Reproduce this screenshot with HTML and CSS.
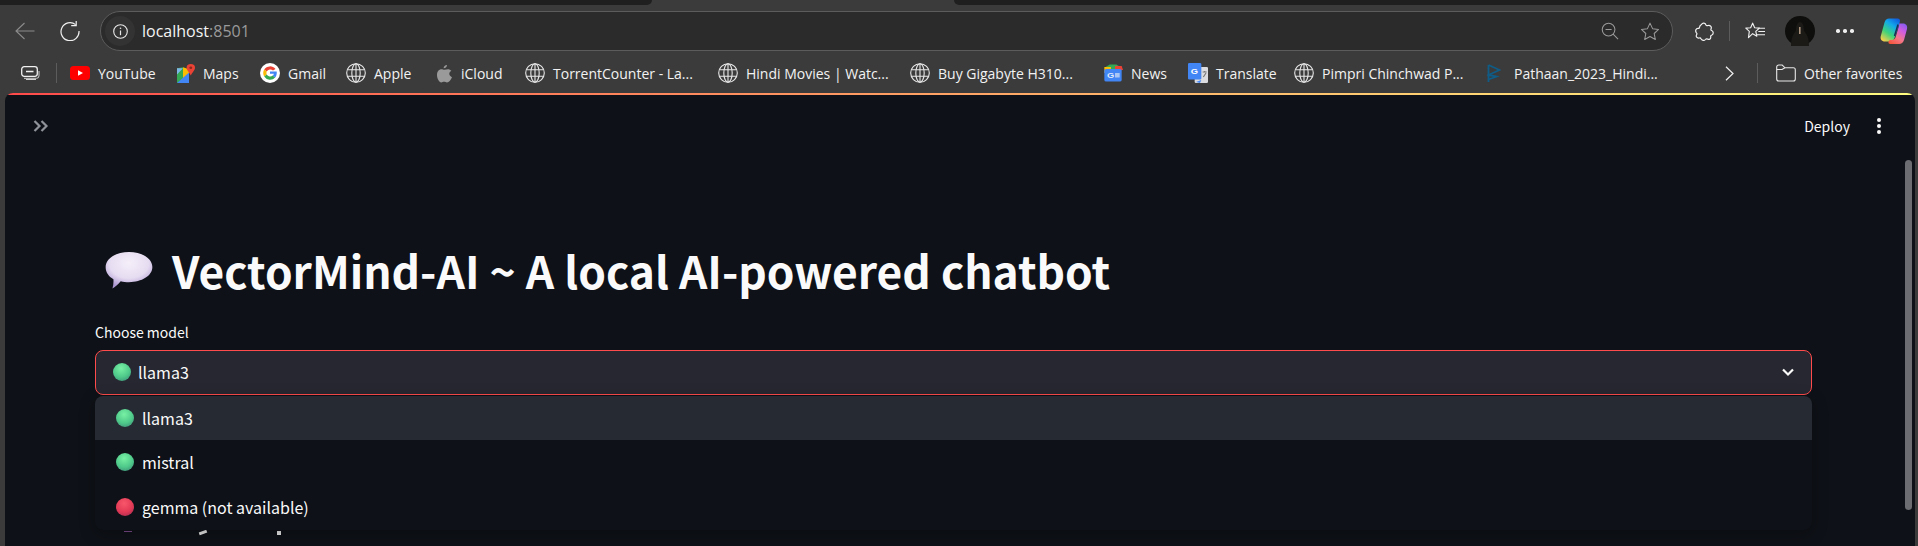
FILE: index.html
```html
<!DOCTYPE html>
<html lang="en">
<head>
<meta charset="utf-8">
<title>VectorMind-AI</title>
<link rel="stylesheet" href="styles.css">
</head>
<body>
<svg class="defs" width="0" height="0" aria-hidden="true">
  <defs>
    <symbol id="globe" viewBox="0 0 20 20">
      <g fill="none" stroke="#e8e8e8" stroke-width="1.100">
        <circle cx="10" cy="10" r="9.300"/>
        <ellipse cx="10" cy="10" rx="4.200" ry="9.300"/>
        <path d="M1.500 6.700h17M1.500 13.300h17M10 .7v18.600"/>
      </g>
    </symbol>
    <radialGradient id="green" cx="45%" cy="30%" r="80%">
      <stop offset="0" stop-color="#78f0a4"/>
      <stop offset=".6" stop-color="#4fc98a"/>
      <stop offset="1" stop-color="#3d8f78"/>
    </radialGradient>
    <radialGradient id="red" cx="45%" cy="30%" r="80%">
      <stop offset="0" stop-color="#f8566a"/>
      <stop offset=".6" stop-color="#e23a56"/>
      <stop offset="1" stop-color="#a82c50"/>
    </radialGradient>
    <radialGradient id="bubble" cx="50%" cy="30%" r="70%">
      <stop offset="0" stop-color="#f5eff9"/>
      <stop offset=".6" stop-color="#e6dcf1"/>
      <stop offset="1" stop-color="#a893d0"/>
    </radialGradient>
    <linearGradient id="cop1" x1=".2" y1="1" x2=".8" y2="0">
      <stop offset="0" stop-color="#f4cf4a"/>
      <stop offset=".35" stop-color="#3fd37a"/>
      <stop offset=".7" stop-color="#12a8ea"/>
      <stop offset="1" stop-color="#1160e0"/>
    </linearGradient>
    <linearGradient id="cop2" x1=".2" y1="1" x2=".8" y2="0">
      <stop offset="0" stop-color="#f5583f"/>
      <stop offset=".35" stop-color="#f5788a"/>
      <stop offset=".7" stop-color="#d05ce0"/>
      <stop offset="1" stop-color="#8a5cf0"/>
    </linearGradient>
    <symbol id="dot-green" viewBox="0 0 18 18"><circle cx="9" cy="9" r="9" fill="url(#green)"/></symbol>
    <symbol id="dot-red" viewBox="0 0 18 18"><circle cx="9" cy="9" r="9" fill="url(#red)"/></symbol>
  </defs>
</svg>

<div class="tabstrip">
  <div class="tab-rest tab-left"></div>
  <div class="tab-rest tab-right"></div>
</div>

<header class="toolbar">
  <svg class="tb-back" width="20" height="18" viewBox="0 0 20 18"><path d="M19.500 9H1M9.500 1 1 9l8.500 8" fill="none" stroke="#8c8c8c" stroke-width="1.100"/></svg>
  <svg class="tb-reload" width="20" height="20" viewBox="0 0 20 20"><path d="M15.600 3.600A9 9 0 1 0 19 10" fill="none" stroke="#f0f0f0" stroke-width="1.200"/><path d="M11.200 4.600h5V0" fill="none" stroke="#f0f0f0" stroke-width="1.200"/></svg>
  <div class="address">
    <span class="site-info">
      <svg width="15" height="15" viewBox="0 0 15 15"><circle cx="7.500" cy="7.500" r="6.800" fill="none" stroke="#e8e8e8" stroke-width="1.100"/><path d="M7.500 6.500v4.700" stroke="#e8e8e8" stroke-width="1.200"/><circle cx="7.500" cy="4.300" r=".8" fill="#e8e8e8"/></svg>
    </span>
    <span class="url">localhost<span class="url-port">:8501</span></span>
    <span class="address-icons">
      <svg width="18" height="18" viewBox="0 0 19 19"><circle cx="8" cy="8" r="6.700" fill="none" stroke="#9a9a9a" stroke-width="1.100"/><path d="M4.800 8h6.400M12.800 12.800 18 18" fill="none" stroke="#9a9a9a" stroke-width="1.100"/></svg>
      <svg width="20" height="19" viewBox="0 0 21 20"><path d="M10.500 1.200 13.200 7l6.300.8-4.600 4.300 1.200 6.300-5.600-3.100-5.600 3.100 1.200-6.300L1.500 7.800 7.800 7Z" fill="none" stroke="#9a9a9a" stroke-width="1.100" stroke-linejoin="round"/></svg>
    </span>
  </div>
  <div class="tb-right">
    <svg class="tb-ext" width="19" height="19" viewBox="0 0 19 19"><path d="M6.500 2.500C7.500.5 10.500.8 11 3c.2.600 1 .8 2 .5 2.500-.5 4 1.500 3 3.500-.3.700 0 1.200.7 1.500 2.100 1 2 4-.2 4.800-.7.200-1 .7-.8 1.700.3 2-1.700 3-3.200 2-.7-.4-1.500-.2-2 .5-1.200 1.500-3.700 1.100-4.500-.7-.3-.8-1-1-1.700-.8-2.300.6-3.800-1.500-2.600-3.500.3-.5.300-1.200-.2-1.700C-.2 9 1 6 3.300 6.300c.7.100 1.100-.3 1.200-1 .2-1.500 1-2.300 2-2.800Z" fill="none" stroke="#f0f0f0" stroke-width="1.200"/></svg>
    <span class="tb-sep"></span>
    <svg class="tb-fav" width="21" height="19" viewBox="0 0 22 20"><path d="M8 1.200 10.100 6l5 .5-3.800 3.400 1.100 5-4.400-2.600-4.400 4.200.9-6.600L.8 6.500 5.900 6Z" fill="none" stroke="#f0f0f0" stroke-width="1.200" stroke-linejoin="round"/><path d="M14 6.500h7M14 10h7M12 13.500h9" stroke="#f0f0f0" stroke-width="1.100"/></svg>
    <svg class="tb-avatar" width="30" height="30" viewBox="0 0 30 30"><circle cx="15" cy="15" r="15" fill="#0e0e0c"/><path d="M6 30c0-9 3-13 5-15 0-6 2-9 4-9s4 3 4 9c2 2 5 6 5 15Z" fill="#1b1a17"/><rect x="14" y="11" width="1.600" height="7" fill="#a8917c"/></svg>
    <span class="tb-dots"><i></i><i></i><i></i></span>
    <svg class="tb-copilot" width="28" height="27" viewBox="0 0 28 27"><path d="M9 .5h8.500c2 0 3 1.500 2.300 3.500L14.500 20c-.8 2.500-2.500 3.500-4.500 3.500H5C1.500 23.500 0 21 .8 18L4.500 4.500C5.200 2 7 .5 9 .5Z" fill="url(#cop1)"/><path d="M19 5.500h4c3 0 4.800 2.400 4 5.500l-3 11c-.8 2.700-2.500 4-5 4H10.500c-1.800 0-2.500-1.500-1.800-2.800.4-.7 1-1.200 2-1.200h1c2 0 3.300-1 4-3L19 8c.2-1 .2-2.500 0-2.500Z" fill="url(#cop2)"/><path d="M18 6.500 14.500 18" stroke="#1c2a55" stroke-width="1.500"/></svg>
  </div>
</header>

<nav class="bookmarks">
  <svg class="bm-collections" width="19" height="14" viewBox="0 0 19 14"><rect x=".7" y=".7" width="15.600" height="9.600" rx="2.500" fill="none" stroke="#f0f0f0" stroke-width="1.300"/><path d="M5 5.500h7.500" stroke="#f0f0f0" stroke-width="1.500"/><path d="M3 12.300h12.500a2.500 2.500 0 0 0 2.500-2.500V5" fill="none" stroke="#cfcfcf" stroke-width="1"/><path d="M5 13.500h10" stroke="#cfcfcf" stroke-width="1"/></svg>
  <span class="bm-sep"></span>
  <a class="bm bm-yt">
    <svg width="20" height="14" viewBox="0 0 20 14"><rect width="20" height="14" rx="3.500" fill="#f00"/><path d="M8 4.300 13 7l-5 2.700Z" fill="#fff"/></svg>
    YouTube
  </a>
  <a class="bm bm-maps">
    <svg width="18" height="19" viewBox="0 0 15 18" preserveAspectRatio="none"><path d="M0 4 5 3v14l-5 1Z" fill="#34a853"/><path d="M5 3l5 2v13l-5-1Z" fill="#fbbc04"/><path d="M0 18 10 8v10Z" fill="#4285f4"/><path d="M0 4h5L0 10Z" fill="#7fb6e8"/><path d="M11.500 0a3.500 3.500 0 0 1 3.500 3.500C15 6 12.500 8 11.500 11 10.500 8 8 6 8 3.500A3.500 3.500 0 0 1 11.500 0Z" fill="#ea4335"/><circle cx="11.500" cy="3.500" r="1.200" fill="#8c2a1f"/></svg>
    Maps
  </a>
  <a class="bm bm-gmail">
    <svg width="20" height="20" viewBox="0 0 20 20"><circle cx="10" cy="10" r="10" fill="#fff"/><path d="M15.500 6A7 7 0 0 0 4.200 6.500L6.700 8.500A4 4 0 0 1 13 7.500Z" fill="#ea4335"/><path d="M4.200 6.500a7 7 0 0 0 0 7L6.700 11.500a4 4 0 0 1 0-3Z" fill="#fbbc05"/><path d="M4.200 13.500a7 7 0 0 0 11 1L12.800 12.500A4 4 0 0 1 6.700 11.500Z" fill="#34a853"/><path d="M10 8.500h6.700c.3 2.300-.2 4.500-1.500 6L12.800 12.500c.6-.5 1-1 1.100-1.700H10Z" fill="#4285f4"/></svg>
    Gmail
  </a>
  <a class="bm bm-apple"><svg width="20" height="20"><use href="#globe"/></svg>Apple</a>
  <a class="bm bm-icloud">
    <svg width="15" height="19" viewBox="0 0 12 18" preserveAspectRatio="none"><path d="M8 1c0 1.500-1 3-2.700 3C5.300 2.500 6.500 1 8 1ZM3.500 5C4.500 5 5 5.500 6 5.500S7.800 5 8.800 5c1 0 2 .6 2.700 1.500C9 8 9.500 11.500 12 12.500 11 15 9.500 17.500 8 17.500c-1 0-1.300-.6-2.300-.6s-1.400.6-2.300.6C1.800 17.500 0 14 0 10.500 0 7 1.800 5 3.500 5Z" fill="#9a9a9a"/></svg>
    iCloud
  </a>
  <a class="bm bm-torrent"><svg width="20" height="20"><use href="#globe"/></svg>TorrentCounter - La...</a>
  <a class="bm bm-hindi"><svg width="20" height="20"><use href="#globe"/></svg>Hindi Movies | Watc...</a>
  <a class="bm bm-buy"><svg width="20" height="20"><use href="#globe"/></svg>Buy Gigabyte H310...</a>
  <a class="bm bm-news">
    <svg width="20" height="18" viewBox="0 0 15 18" preserveAspectRatio="none"><path d="M2 3l3-2.500h5L13 3v6H2Z" fill="#34a853"/><path d="M1 3h5v6H1Z" fill="#fbbc04"/><path d="M9 2h5l1 4H9Z" fill="#ea4335"/><rect x="1" y="5" width="13" height="12.500" rx="1.500" fill="#4285f4"/><text class="bm-icon-text" x="3" y="14" fill="#dfe9fb">G</text><rect x="9" y="9" width="3.500" height="4.500" fill="#a9c6f5"/></svg>
    News
  </a>
  <a class="bm bm-translate">
    <svg width="20" height="20" viewBox="0 0 15 20" preserveAspectRatio="none"><rect x="5" y="4" width="10" height="16" rx="1" fill="#dadce0"/><path d="M6 19l3 1 1-3Z" fill="#4285f4"/><rect width="10" height="16.500" rx="1" fill="#4285f4"/><text class="bm-icon-text" x="2" y="11" fill="#fff">G</text><path d="M11 9h3M12.500 8v1M11.500 14l2-4" stroke="#777" stroke-width=".8" fill="none"/></svg>
    Translate
  </a>
  <a class="bm bm-pimpri"><svg width="20" height="20"><use href="#globe"/></svg>Pimpri Chinchwad P...</a>
  <a class="bm bm-pathaan">
    <svg width="14" height="19" viewBox="0 0 13 19"><path d="M1 1v17M1 1l11 5-11 5 8 1.500-8 3" fill="none" stroke="#0f5c87" stroke-width="1.800"/></svg>
    Pathaan_2023_Hindi...
  </a>
  <svg class="bm-more" width="9" height="15" viewBox="0 0 9 15"><path d="M1 .8 8 7.500 1 14.200" fill="none" stroke="#f0f0f0" stroke-width="1.200"/></svg>
  <span class="bm-sep bm-sep-right"></span>
  <a class="bm bm-other">
    <svg width="20" height="18" viewBox="0 0 20 18"><path d="M.7 3a2 2 0 0 1 2-2h3.500l2.800 2.800h8.300a2 2 0 0 1 2 2V15a2 2 0 0 1-2 2H2.700a2 2 0 0 1-2-2Z" fill="none" stroke="#e8e8e8" stroke-width="1.100"/><path d="M.7 5.500H6l3-1.700" fill="none" stroke="#e8e8e8" stroke-width="1.100"/></svg>
    Other favorites
  </a>
</nav>

<main class="page">
  <div class="decoration"></div>
  <div class="app-top">
    <svg class="sidebar-open" width="16" height="12" viewBox="0 0 16 12"><path d="M1.500 1 6.500 6l-5 5M8.500 1l5 5-5 5" fill="none" stroke="#8f9299" stroke-width="2.200"/></svg>
    <div class="app-actions">
      <span class="deploy">Deploy</span>
      <span class="kebab"><i></i><i></i><i></i></span>
    </div>
  </div>
  <div class="content">
    <h1 class="title">
      <svg class="title-emoji" width="48" height="37" viewBox="0 0 48 38"><path d="M24 0c13 0 24 6.500 24 15.500S37 31 24 31c-3 0-6-.3-8.500-1C13 33 9.500 36 7 37.500c.8-3 1.300-6 1-9.500C3 25.300 0 21 0 15.500 0 6.500 11 0 24 0Z" fill="url(#bubble)"/></svg>
      <span>VectorMind-AI ~ A local AI-powered chatbot</span>
    </h1>
    <label class="field-label">Choose model</label>
    <div class="select">
      <div class="select-box">
        <svg class="dot" width="18" height="18"><use href="#dot-green"/></svg>
        <span>llama3</span>
        <svg class="chev" width="14" height="10" viewBox="0 0 14 10"><path d="M2 2.500 7 7.500l5-5" fill="none" stroke="#fafafa" stroke-width="2.200"/></svg>
      </div>
      <ul class="menu">
        <li class="menu-item is-active"><svg class="dot" width="18" height="18"><use href="#dot-green"/></svg>llama3</li>
        <li class="menu-item"><svg class="dot" width="18" height="18"><use href="#dot-green"/></svg>mistral</li>
        <li class="menu-item"><svg class="dot" width="18" height="18"><use href="#dot-red"/></svg>gemma (not available)</li>
      </ul>
      <span class="peek peek-a"></span>
      <span class="peek peek-b"></span>
      <span class="peek peek-c"></span>
    </div>
  </div>
  <div class="scrollbar"></div>
</main>
</body>
</html>
```
FILE: styles.css
```css
* { box-sizing: border-box; }
html, body { margin: 0; height: 100%; }
body {
  width: 1918px;
  height: 546px;
  overflow: hidden;
  display: flex;
  flex-direction: column;
  background: #3b3b3b;
  font-family: "Open Sans", "Noto Sans", sans-serif;
  color: #f0f0f0;
}
svg { flex: none; }
.defs { position: absolute; }

.tabstrip { height: 5px; flex: none; display: flex; justify-content: space-between; }
.tab-rest { height: 5px; background: #1f1f1f; }
.tab-left { width: 652px; border-bottom-right-radius: 5px; }
.tab-right { width: 964px; border-bottom-left-radius: 5px; }

.toolbar {
  flex: none;
  height: 51px;
  display: flex;
  align-items: center;
  padding: 6px 0 5px 15px;
}
.tb-back { margin-right: 25px; }
.tb-reload { margin-right: 20px; }
.address {
  width: 1573px;
  height: 40px;
  flex: none;
  display: flex;
  align-items: center;
  background: #2b2b2b;
  border: 1px solid #5c5c5c;
  border-radius: 20px;
  padding: 0 12px 0 4px;
}
.site-info {
  width: 30px;
  height: 30px;
  margin-right: 7px;
  border-radius: 50%;
  background: #333;
  display: flex;
  align-items: center;
  justify-content: center;
}
.url { font-size: 16px; color: #f4f4f4; }
.url-port { color: #9a9a9a; }
.address-icons { margin-left: auto; display: flex; align-items: center; gap: 21px; }
.tb-right { display: flex; align-items: center; margin-left: 22px; }
.tb-ext { margin-right: 15px; }
.tb-sep { width: 1px; height: 20px; background: #5c5c5c; margin-right: 15px; }
.tb-fav { margin-right: 19px; }
.tb-avatar { margin-right: 21px; }
.tb-dots { display: flex; gap: 3.5px; margin-right: 26px; }
.tb-dots i { width: 3.5px; height: 3.5px; border-radius: 50%; background: #f0f0f0; }

.bookmarks {
  flex: none;
  height: 37px;
  display: flex;
  align-items: center;
  padding: 0 0 3px 21px;
  font-size: 14px;
  white-space: nowrap;
}
.bm-sep { width: 1px; height: 20px; background: #5c5c5c; margin: 0 13px 0 16px; flex: none; }
.bm { flex: none; display: flex; align-items: center; gap: 8px; color: #f2f2f2; }
.bm-yt { width: 107px; }
.bm-maps { width: 83px; }
.bm-gmail { width: 86px; }
.bm-apple { width: 91px; }
.bm-icloud { width: 88px; gap: 9px; }
.bm-torrent { width: 193px; }
.bm-hindi { width: 192px; }
.bm-buy { width: 193px; }
.bm-news { width: 85px; }
.bm-translate { width: 106px; }
.bm-pimpri { width: 193px; }
.bm-pathaan { width: 238px; gap: 13px; }
.bm-icon-text { font-family: "Liberation Sans", sans-serif; font-size: 7px; font-weight: 700; }
.bm-sep-right { margin: 0 18px 0 23px; }

.page {
  flex: 1;
  min-height: 0;
  margin: 0 3px 0 5px;
  position: relative;
  overflow: hidden;
  border-radius: 8px 8px 0 0;
  background: #0e1117;
  color: #fafafa;
  font-family: "Noto Sans CJK SC", "Noto Sans", sans-serif;
}
.decoration { height: 2px; background: linear-gradient(90deg, #ff4b4b, #fffd80); }
.app-top {
  height: 62px;
  display: flex;
  align-items: center;
  justify-content: space-between;
  padding: 0 34px 0 28px;
}
.app-actions { display: flex; align-items: center; gap: 27px; }
.deploy { font-size: 14px; }
.kebab { display: flex; flex-direction: column; gap: 2px; }
.kebab i { width: 4px; height: 4px; border-radius: 50%; background: #fafafa; }

.content { padding: 0 103px 0 90px; }
.title {
  display: flex;
  align-items: center;
  gap: 19px;
  margin: 85px 0 0;
  padding-left: 10px;
  font-size: 44.3px;
  line-height: 56px;
  font-weight: 700;
}
.title-emoji { flex: none; }
.field-label { display: block; margin-top: 24px; font-size: 14px; line-height: 20px; }
.select { position: relative; margin-top: 8px; }
.select-box {
  height: 45px;
  display: flex;
  align-items: center;
  padding: 0 16px 1px 17px;
  background: #262730;
  border: 1px solid #ff4b4b;
  border-radius: 8px;
  font-size: 16px;
}
.select-box .dot { margin-right: 7px; }
.chev { margin-left: auto; }
.menu {
  position: absolute;
  top: 46px;
  left: 0;
  right: 0;
  z-index: 2;
  margin: 0;
  padding: 0;
  list-style: none;
  height: 134px;
  background: #0e1117;
  border-radius: 8px;
  overflow: hidden;
  box-shadow: 0 4px 16px rgba(0, 0, 0, .28);
  font-size: 16px;
}
.menu-item { height: 45px; display: flex; align-items: center; padding: 0 0 2px 21px; gap: 8px; }
.menu-item.is-active { height: 44px; padding-bottom: 1px; background: #262a32; }
.peek { position: absolute; top: 181px; z-index: 1; }
.peek-a { left: 29px; width: 8px; height: 1px; background: #7a4a8c; }
.peek-b { left: 104px; width: 8px; height: 3px; background: #e6e6e6; transform: rotate(-20deg); }
.peek-c { left: 182px; width: 4px; height: 4px; background: #e6e6e6; }
.scrollbar {
  position: absolute;
  right: 3px;
  top: 67px;
  bottom: 36px;
  width: 7px;
  border-radius: 4px;
  background: #6c6d72;
}
```
